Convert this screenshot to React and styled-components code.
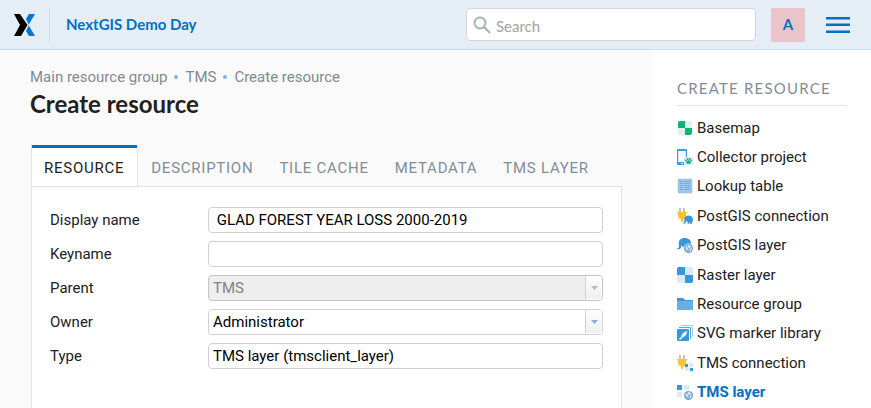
import React from "react";
import styled, { createGlobalStyle } from "styled-components";

const BLUE = "#0070c5";

const GlobalStyle = createGlobalStyle`
  * { box-sizing: border-box; }
  body {
    margin: 0;
    background: #fafafa;
    color: #212121;
    font: 15px/20px Roboto, sans-serif;
  }
  a { color: inherit; text-decoration: none; }
  svg { display: block; flex: none; }
`;

const Page = styled.div`
  display: flex;
  flex-direction: column;
  min-height: 100vh;
`;

const Header = styled.header`
  display: flex;
  align-items: center;
  height: 50px;
  padding: 0 21px 0 14px;
  background: #e5edf7;
  border-bottom: 1px solid #c8dcf0;
`;

const Brand = styled.a`
  display: flex;
  align-items: center;
  height: 34px;
  padding-right: 14px;
  border-right: 1px solid #c8dcf0;
`;

const SiteName = styled.a`
  flex: 1;
  padding: 0 0 2px 16px;
  color: ${BLUE};
  font: bold 15px/20px Lato, sans-serif;
`;

const SearchBox = styled.label`
  display: flex;
  align-items: center;
  gap: 5px;
  width: 290px;
  height: 33px;
  padding: 0 6px;
  background: #fff;
  border: 1px solid #d3d5d8;
  border-radius: 4px;
`;

const SearchInput = styled.input`
  flex: 1;
  min-width: 0;
  height: 31px;
  padding: 2px 0 0;
  border: 0;
  outline: 0;
  background: transparent;
  color: #212121;
  font: 15px/20px Lato, sans-serif;
  &::placeholder { color: #a3a3a3; opacity: 1; }
`;

const Avatar = styled.button`
  width: 34px;
  height: 34px;
  margin: 0 21px 0 15px;
  padding: 0 0 2px;
  border: 0;
  border-radius: 2px;
  background: #e9c4c9;
  color: ${BLUE};
  font: bold 15px/32px Lato, sans-serif;
`;

const MenuButton = styled.button`
  padding: 0;
  border: 0;
  background: none;
`;

const Body = styled.div`
  display: flex;
  flex: 1;
`;

const Main = styled.main`
  display: flex;
  flex-direction: column;
  flex: 1;
  min-width: 0;
  padding: 17px 30px 0;
`;

const Breadcrumbs = styled.nav`
  display: flex;
  align-items: center;
  gap: 7px;
  color: #7f8a93;
`;

const Dot = styled.span`
  width: 4px;
  height: 4px;
  border-radius: 50%;
  background: #7fb7e2;
`;

const Title = styled.h1`
  margin: 1px 0 25px;
  font: bold 24px/32px Lato, sans-serif;
`;

const TabBar = styled.div`
  display: flex;
  margin: 0 1px -1px;
`;

const Tab = styled.button`
  height: 42px;
  padding: 0 12px;
  border: solid transparent;
  border-width: 3px 1px 0;
  border-radius: 2px 2px 0 0;
  background: none;
  color: #828d97;
  font: 15px/20px Roboto, sans-serif;
  letter-spacing: 0.05em;
  white-space: nowrap;
  &[aria-selected="true"] {
    padding-right: 13px;
    border-color: ${BLUE} #e3e3e3 transparent;
    background: #fff;
    color: #212121;
  }
`;

const Panel = styled.form`
  display: flex;
  flex-direction: column;
  gap: 8px;
  flex: 1;
  margin: 0 1px;
  padding: 20px 18px;
  background: #fff;
  border: solid #e3e3e3;
  border-width: 1px 1px 0;
`;

const Field = styled.div`
  display: grid;
  grid-template-columns: 158px 1fr;
  align-items: center;
`;

const TextBox = styled.input`
  width: 100%;
  height: 26px;
  padding: 0 4px;
  border: 1px solid #cfd1d3;
  border-radius: 4px;
  background: #fff;
  color: #000;
  font: 15px/20px Roboto, sans-serif;
`;

const SelectWrap = styled.div`
  position: relative;
  color: #8faad2;
  &:has(select:disabled) { color: #b9b9b9; }
`;

const SelectBox = styled(TextBox).attrs({ as: "select" })`
  display: block;
  appearance: none;
  padding-right: 20px;
  &:disabled {
    border-color: #c3c3c3;
    background: #eee;
    color: #818181;
    opacity: 1;
  }
`;

const SelectArrow = styled.span`
  position: absolute;
  top: 1px;
  right: 1px;
  bottom: 1px;
  display: flex;
  align-items: center;
  justify-content: center;
  width: 17px;
  padding-left: 2px;
  border: 1px solid #fff;
  border-left: 1px solid #cfd1d3;
  border-radius: 0 3px 3px 0;
  background: linear-gradient(#fcfcfc, #efefef);
  pointer-events: none;
`;

const Sidebar = styled.aside`
  flex: none;
  width: 218px;
  padding: 28px 24px 0;
  background: #fff;
`;

const SideHeading = styled.h2`
  margin: 0 0 7px;
  padding-bottom: 6px;
  border-bottom: 1px solid #e6e6e6;
  color: #828d97;
  font: 15px/21px Lato, sans-serif;
  letter-spacing: 0.08em;
  text-transform: uppercase;
  white-space: nowrap;
`;

const ResourceList = styled.ul`
  display: grid;
  grid-auto-rows: 1fr;
  min-height: 294px;
  margin: 0;
  padding: 0;
  list-style: none;
`;

const ResourceLink = styled.a`
  display: flex;
  align-items: center;
  gap: 4px;
  height: 100%;
  white-space: nowrap;
  &[aria-current] {
    color: ${BLUE};
    font-weight: bold;
  }
`;

const Icon = ({ children }) => (
  <svg width="16" height="16" viewBox="0 0 16 16" aria-hidden="true">{children}</svg>
);

const Plug = () => (
  <g>
    <path d="M3 0v4M7 0v4" stroke="#b4b4b4" strokeWidth="1.600" />
    <path d="M0 4h10v1.500H9V8c0 2-1 3-3 3.500V14H4v-2.500C2 11 1 10 1 8V5.500H0z" fill="#fbc32f" />
  </g>
);

const Elephant = () => (
  <path
    d="M2 7C2 3 5 1 9 1c4 0 7 2.500 7 6.500 0 2-.5 3-1.500 4V14h-3v-2.500h-1V14h-3v-3C6 11 5.500 10 5 9c0 3-1 5-3.500 5C.5 14 0 13.500 0 12.500l1.500.2C2.500 12 2 9 2 7z"
    fill="#3b95d9"
  />
);

const Globe = () => (
  <g>
    <circle cx="11.500" cy="11.500" r="4.500" fill="#8db9df" />
    <path d="M8 9l2 1 1 2-1 1zM11 8l3 1-1 2-2-1zM13 12l2-1-1 3-1 1z" fill="#e8f1f9" />
    <circle cx="11.500" cy="11.500" r="4" fill="none" stroke="#75a9d6" />
  </g>
);

const icons = {
  basemap: (
    <g>
      <rect x="1" y="1" width="14" height="14" rx="2" fill="#e1f2ec" />
      <path d="M3 1h5v7H1V3a2 2 0 0 1 2-2zM8 8h7v5a2 2 0 0 1-2 2H8z" fill="#0bb57a" />
    </g>
  ),
  collector: (
    <g>
      <path d="M1 0h8a1 1 0 0 1 1 1v7H8.500V2h-7v11H7v3H1a1 1 0 0 1-1-1V1a1 1 0 0 1 1-1z" fill="#3b9ae0" />
      <path d="M1.500 2h7v11h-7zM4 14h2v1H4z" fill="#fff" />
      <rect x="7" y="8" width="9" height="8" rx="1" fill="#dcebf5" />
      <g fill="#10ae7c">
        <circle cx="9" cy="11.500" r="0.900" />
        <circle cx="10.700" cy="10" r="0.900" />
        <circle cx="12.700" cy="10" r="0.900" />
        <circle cx="14.300" cy="11.500" r="0.900" />
        <path d="M11.700 11.200c1.300 0 2.300 1.500 2.300 2.500 0 1.300-1.300 1-2.300 1s-2.300.3-2.300-1c0-1 1-2.500 2.300-2.500z" />
      </g>
    </g>
  ),
  lookup: (
    <g>
      <rect x="1" y="1" width="14" height="14" fill="#a9caea" />
      <rect x="1.500" y="1.500" width="13" height="13" fill="none" stroke="#8db9e3" strokeDasharray="1 1" strokeWidth="2" />
      <path d="M3 3.500h3M7 3.500h6M3 5.500h3M7 5.500h6M3 7.500h3M7 7.500h6M3 9.500h3M7 9.500h6M3 11.500h3M7 11.500h6" stroke="#6fa8dc" />
    </g>
  ),
  pgConnection: (
    <g>
      <Plug />
      <g transform="translate(6 7) scale(.62)"><Elephant /></g>
    </g>
  ),
  pgLayer: (
    <g>
      <g transform="scale(.88)"><Elephant /></g>
      <circle cx="11.500" cy="11.500" r="5" fill="#fff" />
      <Globe />
    </g>
  ),
  raster: (
    <g>
      <rect width="16" height="16" rx="2" fill="#dbe8f5" />
      <path d="M2 0h6v8H0V2a2 2 0 0 1 2-2zM8 8h8v6a2 2 0 0 1-2 2H8z" fill="#3498db" />
    </g>
  ),
  group: (
    <g>
      <path d="M0 2h6l2 2h8v2H0z" fill="#3f94d6" />
      <path d="M0 5h16v9H0z" fill="#6aaee2" />
    </g>
  ),
  svgLib: (
    <g>
      <path d="M4 .5h11.500V12" fill="none" stroke="#a8cdeb" />
      <path d="M2 2.500h11.500V14" fill="none" stroke="#5ba7df" />
      <rect y="4" width="12" height="12" rx="1" fill="#3498db" />
      <path d="M10.500 5.500L9 10l-3.500 3L4 11.500 6 8z" fill="#fff" />
      <path d="M3.500 12L5 13.500c-.8 1-2 1-3.500 1 1-.5 1-1.500 2-2.500z" fill="#fff" />
    </g>
  ),
  tmsConnection: (
    <g>
      <Plug />
      <path d="M12 8h4v4h-4zM8 12h4v4H8z" fill="#dbe8f5" />
      <path d="M8 9h3v3H8zM13 13h3v3h-3z" fill="#3498db" />
    </g>
  ),
  tmsLayer: (
    <g>
      <path d="M0 1h5v5H0z" fill="#3498db" />
      <path d="M7 1h5v5H7zM0 8h5v5H0z" fill="#dbe8f5" />
      <Globe />
    </g>
  ),
};

const resources = [
  ["basemap", "Basemap"],
  ["collector", "Collector project"],
  ["lookup", "Lookup table"],
  ["pgConnection", "PostGIS connection"],
  ["pgLayer", "PostGIS layer"],
  ["raster", "Raster layer"],
  ["group", "Resource group"],
  ["svgLib", "SVG marker library"],
  ["tmsConnection", "TMS connection"],
  ["tmsLayer", "TMS layer"],
];

const tabs = ["RESOURCE", "DESCRIPTION", "TILE CACHE", "METADATA", "TMS LAYER"];

const TextField = ({ id, label, value = "" }) => (
  <Field>
    <label htmlFor={id}>{label}</label>
    <TextBox id={id} defaultValue={value} />
  </Field>
);

const SelectField = ({ id, label, value, disabled }) => (
  <Field>
    <label htmlFor={id}>{label}</label>
    <SelectWrap>
      <SelectBox id={id} disabled={disabled}>
        <option>{value}</option>
      </SelectBox>
      <SelectArrow>
        <svg width="7" height="4" viewBox="0 0 7 4"><path d="M0 0h7L3.500 4z" fill="currentColor" /></svg>
      </SelectArrow>
    </SelectWrap>
  </Field>
);

export default function App() {
  return (
    <Page>
      <GlobalStyle />
      <Header>
        <Brand href="#" aria-label="NextGIS">
          <svg width="21" height="22" viewBox="0 0 21 22">
            <path d="M15 0h6l-6.500 11L21 22h-6l-3-5 3-6-3-6z" fill="#0078d0" />
            <path d="M0 0h6l7.500 11L7 22H0l6-11z" fill="#000" />
          </svg>
        </Brand>
        <SiteName href="#">NextGIS Demo Day</SiteName>
        <SearchBox>
          <svg width="18" height="18" viewBox="0 0 18 18" fill="none" stroke="#a9b0b7" strokeWidth="2">
            <circle cx="7" cy="7" r="5.500" />
            <path d="M11 11l6 6" />
          </svg>
          <SearchInput type="text" placeholder="Search" aria-label="Search" />
        </SearchBox>
        <Avatar>A</Avatar>
        <MenuButton aria-label="Menu">
          <svg width="24" height="16" viewBox="0 0 24 16" fill={BLUE}>
            <path d="M0 0h24v2H0zM0 7h24v2H0zM0 14h24v2H0z" />
            <path d="M0 2h24v1H0zM0 6h24v1H0zM0 13h24v1H0z" opacity=".5" />
          </svg>
        </MenuButton>
      </Header>
      <Body>
        <Main>
          <Breadcrumbs aria-label="Breadcrumbs">
            <a href="#">Main resource group</a>
            <Dot />
            <a href="#">TMS</a>
            <Dot />
            <a href="#">Create resource</a>
          </Breadcrumbs>
          <Title>Create resource</Title>
          <TabBar role="tablist">
            {tabs.map((tab, i) => (
              <Tab key={tab} role="tab" aria-selected={i === 0}>{tab}</Tab>
            ))}
          </TabBar>
          <Panel>
            <TextField id="display-name" label="Display name" value=" GLAD FOREST YEAR LOSS 2000-2019" />
            <TextField id="keyname" label="Keyname" />
            <SelectField id="parent" label="Parent" value="TMS" disabled />
            <SelectField id="owner" label="Owner" value="Administrator" />
            <TextField id="type" label="Type" value="TMS layer (tmsclient_layer)" />
          </Panel>
        </Main>
        <Sidebar>
          <SideHeading>Create resource</SideHeading>
          <ResourceList>
            {resources.map(([icon, name]) => (
              <li key={name}>
                <ResourceLink href="#" aria-current={icon === "tmsLayer" ? "page" : undefined}>
                  <Icon>{icons[icon]}</Icon>
                  {name}
                </ResourceLink>
              </li>
            ))}
          </ResourceList>
        </Sidebar>
      </Body>
    </Page>
  );
}
